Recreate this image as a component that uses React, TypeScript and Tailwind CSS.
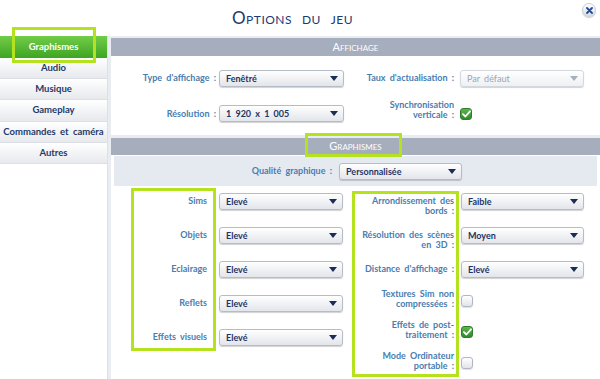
import { ReactNode } from "react";

const Arrow = ({ muted = false }: { muted?: boolean }) => (
	<svg width="8" height="5" viewBox="0 0 8 5">
		<path d="M0 0h8L4 5z" fill={muted ? "#a7b0bd" : "#1b2d55"} />
	</svg>
);

function Select({
	value,
	className,
	muted = false,
}: {
	value: string;
	className: string;
	muted?: boolean;
}) {
	return (
		<div
			className={`flex h-[17px] shrink-0 items-center justify-between rounded-[3px] border pl-[6px] pr-[5px] shadow-[0_1px_1px_rgba(0,0,0,0.18)] ${
				muted
					? "border-[#d3d8df] bg-linear-to-b from-white to-[#eef0f3] font-normal text-[#9aa6b6]"
					: "border-[#b5bcc7] bg-linear-to-b from-white to-[#e2e5ea] font-bold text-[#1f3564]"
			} ${className}`}
		>
			<span className="text-[9px] leading-none [word-spacing:2px]">{value}</span>
			<Arrow muted={muted} />
		</div>
	);
}

function Checkbox({ checked = false, className = "" }: { checked?: boolean; className?: string }) {
	return checked ? (
		<div
			className={`flex h-[12px] w-[12px] shrink-0 items-center justify-center rounded-[3px] border border-[#2f7d2a] bg-linear-to-b from-[#5cb54d] to-[#2f8c2a] ${className}`}
		>
			<svg width="9" height="8" viewBox="0 0 9 8">
				<path d="M1 4.2 3.4 6.5 8 1.3" fill="none" stroke="white" strokeWidth="1.8" strokeLinecap="round" strokeLinejoin="round" />
			</svg>
		</div>
	) : (
		<div
			className={`h-[12px] w-[12px] shrink-0 rounded-[3px] border border-[#b0b7c2] bg-linear-to-b from-white to-[#e1e4e9] shadow-[0_1px_1px_rgba(0,0,0,0.12)] ${className}`}
		/>
	);
}

function Label({ children, className }: { children: ReactNode; className: string }) {
	return (
		<div
			className={`shrink-0 whitespace-nowrap text-right text-[9px] font-bold leading-[10px] text-[#4a7db0] [word-spacing:2px] ${className}`}
		>
			{children}
		</div>
	);
}

function SectionBar({ title, className }: { title: string; className: string }) {
	return (
		<div
			className={`flex items-center justify-center bg-[#a6aebd] text-[11px] text-white [font-variant-caps:small-caps] ${className}`}
		>
			{title}
		</div>
	);
}

const tabs = ["Audio", "Musique", "Gameplay", "Commandes et caméra", "Autres"];

const leftRows = ["Sims", "Objets", "Eclairage", "Reflets", "Effets visuels"];

const rightSelects = [
	{ label: ["Arrondissement des", "bords :"], value: "Faible" },
	{ label: ["Résolution des scènes", "en 3D :"], value: "Moyen" },
	{ label: ["Distance d'affichage :"], value: "Elevé" },
];

const rightChecks = [
	{ label: ["Textures Sim non", "compressées :"], checked: false },
	{ label: ["Effets de post-", "traitement :"], checked: true },
	{ label: ["Mode Ordinateur", "portable :"], checked: false },
];

export default function App() {
	return (
		<div className="relative h-[379px] w-[600px] overflow-hidden bg-white font-['Lato',sans-serif]">
			{/* Title */}
			<div className="flex h-[36px] items-center justify-center pr-[15px]">
				<span className="text-[17px] tracking-[0.5px] text-[#1c3a73] [font-variant-caps:small-caps] [word-spacing:5px]">
					Options du jeu
				</span>
			</div>
			<div className="absolute right-[4px] top-[3px] flex h-[14px] w-[14px] items-center justify-center rounded-full border border-[#c9ced6] bg-linear-to-b from-white to-[#d9dde3] shadow-[0_1px_1px_rgba(0,0,0,0.2)]">
				<svg width="7" height="7" viewBox="0 0 7 7">
					<path d="M1 1 6 6M6 1 1 6" stroke="#244a94" strokeWidth="1.8" strokeLinecap="round" />
				</svg>
			</div>

			<div className="flex h-[343px]">
				{/* Sidebar */}
				<div className="flex w-[108px] shrink-0 flex-col border-r border-[#dde1e7] bg-white">
					<div className="flex h-[22px] items-center justify-center bg-linear-to-b from-[#72cc48] to-[#3ca521] text-[9.5px] font-bold text-white">
						Graphismes
					</div>
					{tabs.map((t) => (
						<div
							key={t}
							className="flex h-[21.2px] items-center justify-center border-b border-[#dcdfe5] bg-linear-to-b from-white to-[#e7e9ed] text-[9.5px] font-bold text-[#223a6a] [word-spacing:2px]"
						>
							{t}
						</div>
					))}
				</div>

				{/* Main */}
				<div className="flex flex-1 flex-col bg-[#e9ecf1] pl-[3px] pt-[2px]">
					<SectionBar title="Affichage" className="h-[18px]" />
					<div className="flex h-[80px] flex-col bg-white pt-[14px]">
						<div className="flex h-[17px] items-center">
							<Label className="w-[105px]">Type d'affichage :</Label>
							<Select value="Fenêtré" className="ml-[3px] w-[125px]" />
							<Label className="w-[110px]">Taux d'actualisation :</Label>
							<Select value="Par défaut" muted className="ml-[6px] w-[124px]" />
						</div>
						<div className="mt-[13px] flex items-start">
							<Label className="mt-[9px] w-[105px]">Résolution :</Label>
							<Select value="1 920 x 1 005" className="ml-[3px] mt-[5px] w-[125px]" />
							<Label className="w-[110px]">
								Synchronisation
								<br />
								verticale :
							</Label>
							<Checkbox checked className="ml-[6px] mt-[8px]" />
						</div>
					</div>

					<SectionBar title="Graphismes" className="mt-[3px] h-[17px]" />
					<div className="flex flex-1 flex-col bg-white">
						<div className="mx-[3px] mt-[1px] flex h-[30px] items-center bg-[#e5e9f0]">
							<Label className="w-[218px]">Qualité graphique :</Label>
							<Select value="Personnalisée" className="ml-[7px] w-[123px]" />
						</div>
						<div className="-mt-[2px] flex">
							<div className="flex flex-col">
								{leftRows.map((r) => (
									<div key={r} className="flex h-[34px] items-center">
										<Label className="w-[96px]">{r}</Label>
										<Select value="Elevé" className="ml-[12px] w-[124px]" />
									</div>
								))}
							</div>
							<div className="ml-[6px] flex flex-col">
								{rightSelects.map((r) => (
									<div key={r.value} className="flex h-[34px] items-start">
										<Label className="mt-[12px] w-[105px]">
											{r.label.map((l, i) => (
												<div key={i}>{l}</div>
											))}
										</Label>
										<Select value={r.value} className="ml-[7px] mt-[9px] w-[123px]" />
									</div>
								))}
								{rightChecks.map((r) => (
									<div key={r.label[0]} className="flex h-[31px] items-start">
										<Label className="mt-[3px] w-[105px]">
											{r.label.map((l, i) => (
												<div key={i}>{l}</div>
											))}
										</Label>
										<Checkbox checked={r.checked} className="ml-[7px] mt-[9px]" />
									</div>
								))}
							</div>
						</div>
					</div>
				</div>
			</div>

			{/* Highlight annotations */}
			<div className="pointer-events-none absolute left-[12px] top-[27px] h-[36px] w-[84px] border-[3px] border-[#b4e21e]" />
			<div className="pointer-events-none absolute left-[305px] top-[133px] h-[24px] w-[97px] border-[3px] border-[#b4e21e]" />
			<div className="pointer-events-none absolute left-[131px] top-[188px] h-[163px] w-[85px] border-[3px] border-[#b4e21e]" />
			<div className="pointer-events-none absolute left-[352px] top-[191px] h-[186px] w-[107px] border-[3px] border-[#b4e21e]" />
		</div>
	);
}
